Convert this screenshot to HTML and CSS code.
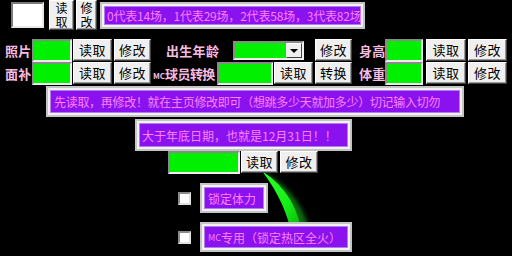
FILE: index.html
```html
<!DOCTYPE html>
<html lang="zh-CN">
<head>
<meta charset="utf-8">
<link rel="stylesheet" href="styles.css">
</head>
<body>
<svg class="arc" width="512" height="256" viewBox="0 0 512 256">
  <defs>
    <linearGradient id="g" x1="0" y1="0" x2="1" y2="1">
      <stop offset="0" stop-color="#30ff30"/>
      <stop offset="0.55" stop-color="#14f014"/>
      <stop offset="1" stop-color="#0a9a0a"/>
    </linearGradient>
    <filter id="blur" x="-20%" y="-20%" width="140%" height="140%">
      <feGaussianBlur stdDeviation="2"/>
    </filter>
  </defs>
  <path d="M262 171 Q306 194 312 244 L302 244 Q294 202 262 171 Z" fill="#0c6a0c" filter="url(#blur)"/>
  <path d="M262 171 Q298 194 303 240 L293 240 Q286 202 262 171 Z" fill="url(#g)"/>
</svg>
<div class="screen">
  <div class="row r1">
    <div class="textbox"></div>
    <button class="btn vbtn b25">读<br>取</button>
    <button class="btn vbtn b21">修<br>改</button>
    <div class="frame f-top"><div class="fi">0代表14场，1代表29场，2代表58场，3代表82场</div></div>
  </div>

  <div class="row r2">
    <span class="lbl l-first">照片</span>
    <div class="green g39"></div>
    <button class="btn b39">读取</button>
    <button class="btn b37 ml2">修改</button>
    <span class="lbl l-age">出生年龄</span>
    <div class="combo"><div class="combo-val"></div><div class="combo-btn"><span class="tri"></span></div></div>
    <button class="btn b37 ml11">修改</button>
    <span class="lbl l-h">身高</span>
    <div class="green g37"></div>
    <button class="btn b40 ml2">读取</button>
    <button class="btn b39 ml2">修改</button>
  </div>

  <div class="row r3">
    <span class="lbl l-first">面补</span>
    <div class="green g39"></div>
    <button class="btn b39">读取</button>
    <button class="btn b37 ml2">修改</button>
    <span class="lbl l-mc"><small>MC</small>球员转换</span>
    <div class="green g55"></div>
    <button class="btn b39">读取</button>
    <button class="btn b37 ml2">转换</button>
    <span class="lbl l-h">体重</span>
    <div class="green g37"></div>
    <button class="btn b40 ml2">读取</button>
    <button class="btn b39 ml2">修改</button>
  </div>

  <div class="row r4">
    <div class="frame f-long"><div class="fi">先读取，再修改！就在主页修改即可（想跳多少天就加多少）切记输入切勿</div></div>
  </div>

  <div class="row r5">
    <div class="frame f-date"><div class="fi">大于年底日期，也就是12月31日！！</div></div>
  </div>

  <div class="row r6">
    <div class="green g71"></div>
    <button class="btn b37">读取</button>
    <button class="btn b38 ml2">修改</button>
  </div>

  <div class="row r7">
    <span class="check"></span>
    <div class="frame f-lock"><div class="fi">锁定体力</div></div>
  </div>

  <div class="row r8">
    <span class="check"></span>
    <div class="frame f-mc"><div class="fi"><small>MC</small>专用（锁定热区全火）</div></div>
  </div>
</div>
</body>
</html>
```

FILE: styles.css
```css
html {
  margin: 0;
  padding: 0;
  background: #000;
}
body {
  margin: 0;
  padding: 0;
  width: 512px;
  height: 256px;
  overflow: hidden;
  font-family: "Noto Sans CJK SC", "Noto Sans", sans-serif;
}
.arc {
  position: absolute;
  left: 0;
  top: 0;
  z-index: -1;
}
.screen {
  display: flex;
  flex-direction: column;
}
.row {
  display: flex;
  align-items: flex-start;
}

/* buttons */
.btn {
  box-sizing: border-box;
  margin: 0;
  padding: 0;
  height: 22px;
  background: #efefef;
  border: 1px solid;
  border-color: #fff #404040 #404040 #fff;
  box-shadow: inset -1px -1px 0 #9a9a9a;
  font-family: "Noto Sans CJK SC", sans-serif;
  font-size: 13px;
  line-height: 18px;
  color: #000;
  text-align: center;
  letter-spacing: 0.5px;
}
.vbtn {
  height: 30px;
  line-height: 14px;
  font-size: 12px;
  padding: 0;
  letter-spacing: 0;
}
.b21 { width: 21px; margin-left: 2px; }
.b25 { width: 25px; margin-left: 5px; }
.b37 { width: 37px; }
.b38 { width: 38px; }
.b39 { width: 39px; }
.b40 { width: 40px; }
.ml2 { margin-left: 2px; }
.ml11 { margin-left: 11px; }

/* inputs */
.textbox {
  box-sizing: border-box;
  width: 33px;
  height: 26px;
  margin-top: 2px;
  margin-left: 11px;
  background: #fff;
  border: 2px solid;
  border-color: #7a7a7a #e8e8e8 #e8e8e8 #7a7a7a;
}
.green {
  box-sizing: border-box;
  height: 23px;
  background: #00f000;
  border: 2px solid;
  border-color: #8a8a8a #f0f0f0 #f0f0f0 #8a8a8a;
  margin-right: 1px;
}
.g37 { width: 38px; }
.g39 { width: 40px; }
.g55 { width: 56px; }
.g71 { width: 72px; }

.combo {
  box-sizing: border-box;
  display: flex;
  width: 71px;
  height: 19px;
  margin-left: 14px;
  margin-top: 2px;
  border: 2px solid;
  border-color: #8a8a8a #f0f0f0 #f0f0f0 #8a8a8a;
  background: #00f000;
}
.combo-val { flex: 1; }
.combo-btn {
  box-sizing: border-box;
  width: 16px;
  height: 15px;
  background: #efefef;
  border: 1px solid;
  border-color: #fff #404040 #404040 #fff;
  display: flex;
  align-items: center;
  justify-content: center;
}
.tri {
  width: 0;
  height: 0;
  border-left: 4px solid transparent;
  border-right: 4px solid transparent;
  border-top: 4px solid #000;
}

/* labels */
.lbl {
  color: #f6bce0;
  font-size: 13px;
  font-weight: bold;
  line-height: 23px;
  white-space: nowrap;
  letter-spacing: 0.3px;
}
.lbl small { font-size: 8px; letter-spacing: 0; }
.l-first { width: 27px; margin-left: 5px; }
.l-age { margin-left: 15px; width: 53px; }
.l-mc { width: 64px; margin-left: 2px; letter-spacing: -0.6px; }
.l-h { margin-left: 7px; width: 26px; }

/* rows */
.r2 { margin-top: 9px; height: 23px; }
.r3 { height: 24px; }
.r4 { height: 32px; }
.r5 { height: 33px; }
.r6 { height: 23px; margin-left: 168px; }
.r7 { margin-top: 9px; height: 39px; align-items: flex-start; }
.r8 { height: 34px; align-items: flex-start; }

/* purple frames */
.frame {
  box-sizing: border-box;
  border: 2px solid #c4c4c4;
  background: #f2f2f2;
  padding: 2px;
}
.fi {
  box-sizing: border-box;
  height: 100%;
  background: #8a12ee;
  border: 1px solid #b47cf0;
  color: #ff80ff;
  font-size: 12px;
  white-space: nowrap;
  display: flex;
  align-items: center;
  padding-left: 2px;
}
.fi small { font-size: 9px; }
.f-top { width: 265px; height: 27px; margin-top: 2px; margin-left: 3px; }
.f-top .fi { letter-spacing: -0.2px; }
.f-long { width: 418px; height: 31px; margin-left: 46px; }
.f-long .fi { padding-left: 3px; letter-spacing: -0.3px; }
.f-date { width: 217px; height: 32px; margin-left: 135px; margin-top: 1px; }
.f-date .fi { padding-left: 2px; }
.f-lock { width: 68px; height: 30px; margin-left: 9px; }
.f-lock .fi { padding-left: 3px; }
.f-mc { width: 152px; height: 30px; margin-left: 9px; }
.f-mc .fi { padding-left: 3px; }

.check {
  box-sizing: border-box;
  width: 13px;
  height: 13px;
  margin-left: 178px;
  margin-top: 9px;
  background: #fff;
  border: 2px solid;
  border-color: #8a8a8a #e0e0e0 #e0e0e0 #8a8a8a;
}
```
